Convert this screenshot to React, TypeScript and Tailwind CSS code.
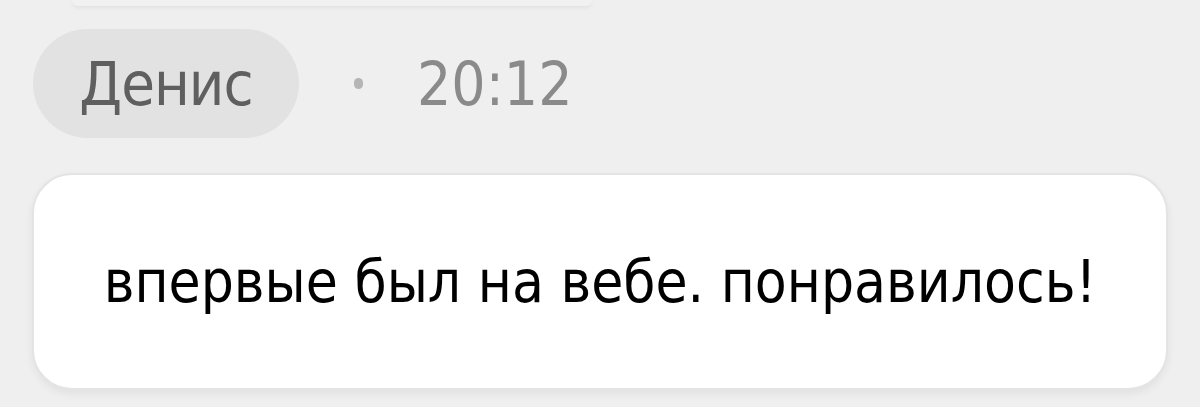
export default function App() {
  return (
    <div
      className="min-h-screen w-full bg-[#efefef] flex flex-col"
      style={{ fontFamily: '"DejaVu Sans Condensed", "DejaVu Sans", sans-serif' }}
    >
      {/* tail of the previous message card */}
      <div className="mx-[72px] w-[520px] h-[6px] rounded-b-[24px] bg-[#f1f1f1] shadow-[0_2px_4px_rgba(0,0,0,0.06)]" />

      <div className="flex items-center pl-[33px] mt-[23px] h-[109px]">
        <div className="h-[109px] w-[266px] rounded-full bg-[#e2e2e2] flex items-center justify-center">
          <span className="text-[61px] leading-none text-[#5f5f5f] tracking-[-1px]">Денис</span>
        </div>
        <span className="ml-[55px] w-[9px] h-[11px] rounded-full bg-[#b5b5b5]" />
        <span className="ml-[54px] text-[60px] leading-none text-[#8a8a8a]">20:12</span>
      </div>

      <div className="ml-[32px] mt-[35px] w-[1136px] h-[217px] rounded-[40px] bg-white border-2 border-[#e4e4e4] shadow-[0_4px_8px_rgba(0,0,0,0.06)] flex items-center justify-center">
        <p className="text-[58px] leading-none text-black">впервые был на вебе. понравилось!</p>
      </div>
    </div>
  );
}
